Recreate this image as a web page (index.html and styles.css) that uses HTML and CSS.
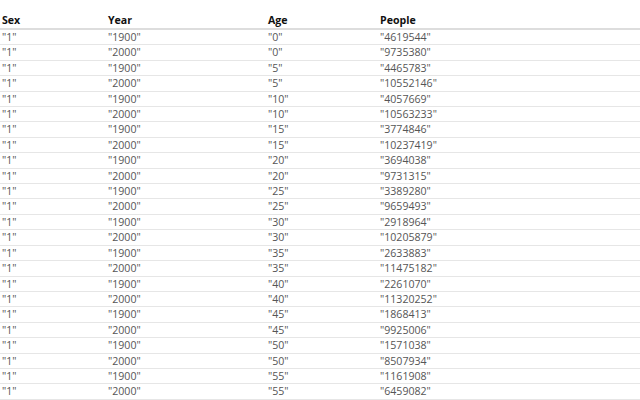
FILE: index.html
```html
<!DOCTYPE html>
<html>
<head>
<meta charset="utf-8">
<link rel="stylesheet" href="styles.css">
</head>
<body>
<table class="data">
<colgroup><col class="c1"><col class="c2"><col class="c3"><col class="c4"></colgroup>
<thead>
<tr><th>Sex</th><th>Year</th><th>Age</th><th>People</th></tr>
</thead>
<tbody>
<tr><td>"1"</td><td>"1900"</td><td>"0"</td><td>"4619544"</td></tr>
<tr><td>"1"</td><td>"2000"</td><td>"0"</td><td>"9735380"</td></tr>
<tr><td>"1"</td><td>"1900"</td><td>"5"</td><td>"4465783"</td></tr>
<tr><td>"1"</td><td>"2000"</td><td>"5"</td><td>"10552146"</td></tr>
<tr><td>"1"</td><td>"1900"</td><td>"10"</td><td>"4057669"</td></tr>
<tr><td>"1"</td><td>"2000"</td><td>"10"</td><td>"10563233"</td></tr>
<tr><td>"1"</td><td>"1900"</td><td>"15"</td><td>"3774846"</td></tr>
<tr><td>"1"</td><td>"2000"</td><td>"15"</td><td>"10237419"</td></tr>
<tr><td>"1"</td><td>"1900"</td><td>"20"</td><td>"3694038"</td></tr>
<tr><td>"1"</td><td>"2000"</td><td>"20"</td><td>"9731315"</td></tr>
<tr><td>"1"</td><td>"1900"</td><td>"25"</td><td>"3389280"</td></tr>
<tr><td>"1"</td><td>"2000"</td><td>"25"</td><td>"9659493"</td></tr>
<tr><td>"1"</td><td>"1900"</td><td>"30"</td><td>"2918964"</td></tr>
<tr><td>"1"</td><td>"2000"</td><td>"30"</td><td>"10205879"</td></tr>
<tr><td>"1"</td><td>"1900"</td><td>"35"</td><td>"2633883"</td></tr>
<tr><td>"1"</td><td>"2000"</td><td>"35"</td><td>"11475182"</td></tr>
<tr><td>"1"</td><td>"1900"</td><td>"40"</td><td>"2261070"</td></tr>
<tr><td>"1"</td><td>"2000"</td><td>"40"</td><td>"11320252"</td></tr>
<tr><td>"1"</td><td>"1900"</td><td>"45"</td><td>"1868413"</td></tr>
<tr><td>"1"</td><td>"2000"</td><td>"45"</td><td>"9925006"</td></tr>
<tr><td>"1"</td><td>"1900"</td><td>"50"</td><td>"1571038"</td></tr>
<tr><td>"1"</td><td>"2000"</td><td>"50"</td><td>"8507934"</td></tr>
<tr><td>"1"</td><td>"1900"</td><td>"55"</td><td>"1161908"</td></tr>
<tr><td>"1"</td><td>"2000"</td><td>"55"</td><td>"6459082"</td></tr>
</tbody>
</table>
</body>
</html>
```
FILE: styles.css
```css
html, body {
  margin: 0;
  padding: 0;
  background: #fff;
}
body {
  font-family: "Open Sans", "Noto Sans", sans-serif;
  font-size: 10.6px;
}
.data {
  width: 100%;
  table-layout: fixed;
  border-collapse: collapse;
  margin-top: 13px;
}
.data th {
  text-align: left;
  font-weight: bold;
  color: #111;
  padding: 0 2px;
  height: 15px;
  line-height: 15px;
  border-bottom: 2px solid #ddd;
}
.data td {
  color: #555;
  padding: 0 2px;
  height: 14.4px;
  line-height: 14.4px;
  border-bottom: 1px solid #e6e6e6;
}
.c1 { width: 106px; }
.c2 { width: 160px; }
.c3 { width: 112px; }
.c4 { width: 262px; }
```
